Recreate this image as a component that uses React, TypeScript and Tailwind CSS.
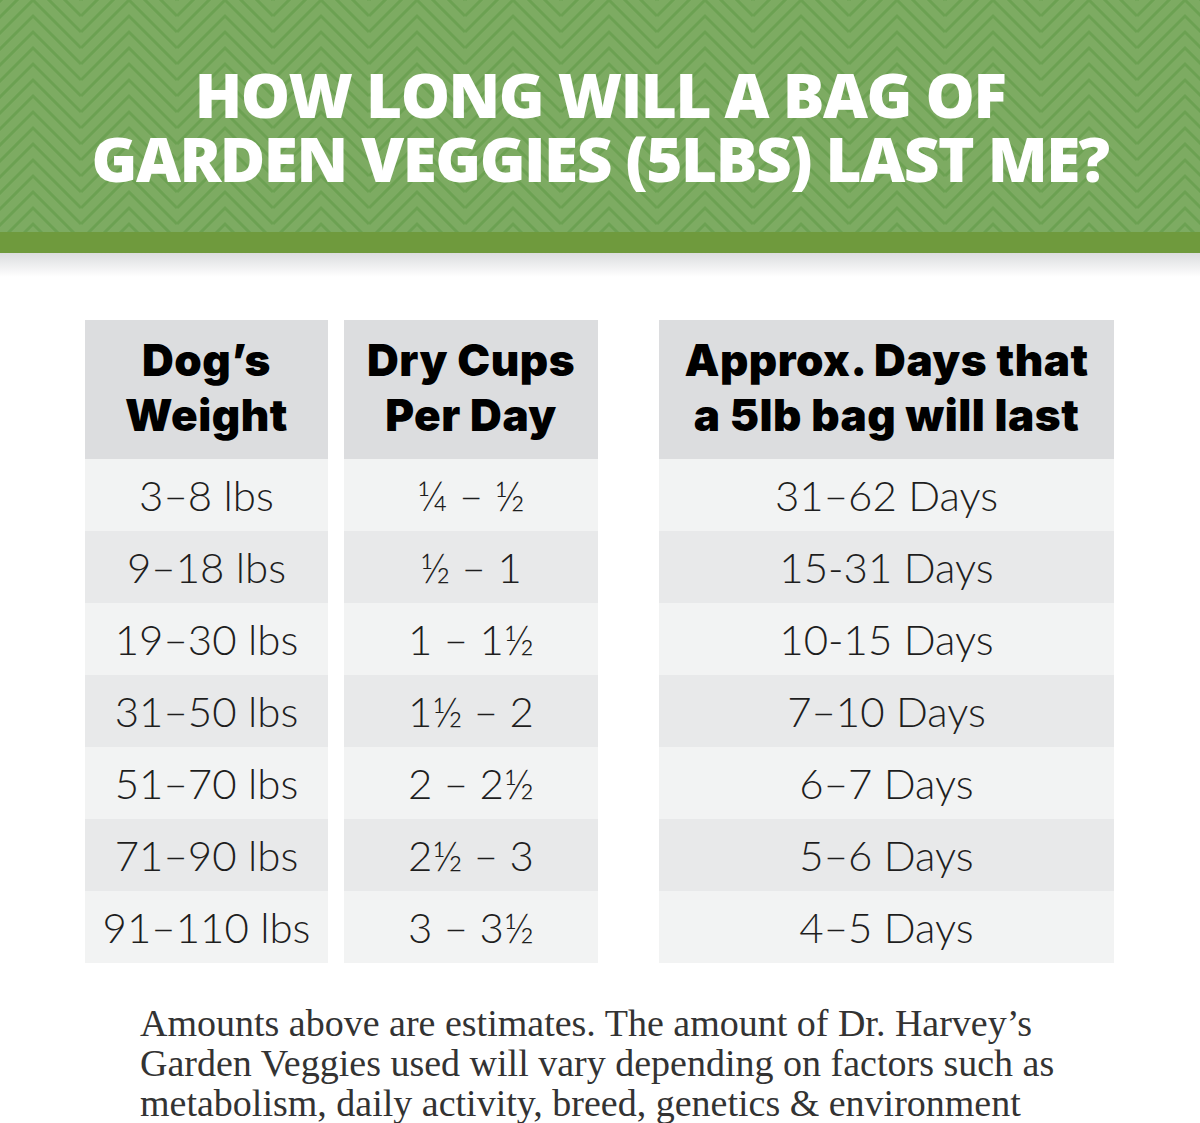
import React from "react";

const rows: [string, string, string][] = [
  ["3–8 lbs", "¼ – ½", "31–62 Days"],
  ["9–18 lbs", "½ – 1", "15-31 Days"],
  ["19–30 lbs", "1 – 1½", "10-15 Days"],
  ["31–50 lbs", "1½ – 2", "7–10 Days"],
  ["51–70 lbs", "2 – 2½", "6–7 Days"],
  ["71–90 lbs", "2½ – 3", "5–6 Days"],
  ["91–110 lbs", "3 – 3½", "4–5 Days"],
];

function Chevrons() {
  const lines = [];
  for (let k = -4; k <= 4; k++) {
    lines.push(
      <polyline
        key={k}
        points={`0,${48 + 16 * k} 48,${16 * k} 96,${48 + 16 * k}`}
        fill="none"
        stroke="#6ca152"
        strokeWidth="3"
      />
    );
  }
  return (
    <svg className="absolute inset-0 w-full h-full" aria-hidden="true">
      <defs>
        <pattern id="chev" width="96" height="48" patternUnits="userSpaceOnUse" x="-15" y="0">
          {lines}
        </pattern>
      </defs>
      <rect width="100%" height="100%" fill="url(#chev)" />
    </svg>
  );
}

export default function App() {
  const headFont = { fontFamily: "Lato, 'Open Sans', sans-serif" };
  return (
    <div className="w-[1200px] h-[1123px] bg-white overflow-hidden" style={headFont}>
      <div className="relative h-[232px] bg-[#7dab62] overflow-hidden">
        <Chevrons />
        <div
          className="relative flex flex-col items-center pt-[62px] text-white text-[62px] leading-[64px] font-extrabold tracking-[-1.5px]"
          style={{ fontFamily: "'Open Sans', sans-serif" }}
        >
          <div>HOW LONG WILL A BAG OF</div>
          <div>GARDEN VEGGIES (5LBS) LAST ME?</div>
        </div>
      </div>
      <div className="h-[21px] bg-[#6f9a3d]" />
      <div className="h-[24px] bg-gradient-to-b from-[#dcdddf] to-white" />
      <div className="flex pt-[43px] pl-[85px]">
        <Column width="w-[243px]" head={["Dog’s", "Weight"]} idx={0} />
        <div className="w-[16px]" />
        <Column width="w-[254px]" head={["Dry Cups", "Per Day"]} idx={1} />
        <div className="w-[61px]" />
        <Column width="w-[455px]" head={["Approx. Days that", "a 5lb bag will last"]} idx={2} />
      </div>
      <div
        className="pl-[140px] pt-[40px] text-[38px] leading-[40px] text-[#333333]"
        style={{ fontFamily: "'Liberation Serif', serif" }}
      >
        <div>Amounts above are estimates. The amount of Dr. Harvey’s</div>
        <div>Garden Veggies used will vary depending on factors such as</div>
        <div>metabolism, daily activity, breed, genetics &amp; environment</div>
      </div>
    </div>
  );
}

function Column({ width, head, idx }: { width: string; head: string[]; idx: number }) {
  return (
    <div className={`${width} flex flex-col`}>
      <div
        className="h-[139px] bg-[#dcdddf] flex flex-col items-center justify-center text-black font-black text-[44px] leading-[55px] tracking-[0.5px] pb-[4px]"
        style={{ fontFamily: "Inter, Lato, sans-serif" }}
      >
        {head.map((h) => (
          <div key={h}>{h}</div>
        ))}
      </div>
      {rows.map((r, i) => (
        <div
          key={i}
          className={`h-[72px] flex items-center justify-center text-[42px] font-light text-[#1e1e1e] ${
            i % 2 === 0 ? "bg-[#f2f3f3]" : "bg-[#e8e9ea]"
          }`}
        >
          {r[idx]}
        </div>
      ))}
    </div>
  );
}
